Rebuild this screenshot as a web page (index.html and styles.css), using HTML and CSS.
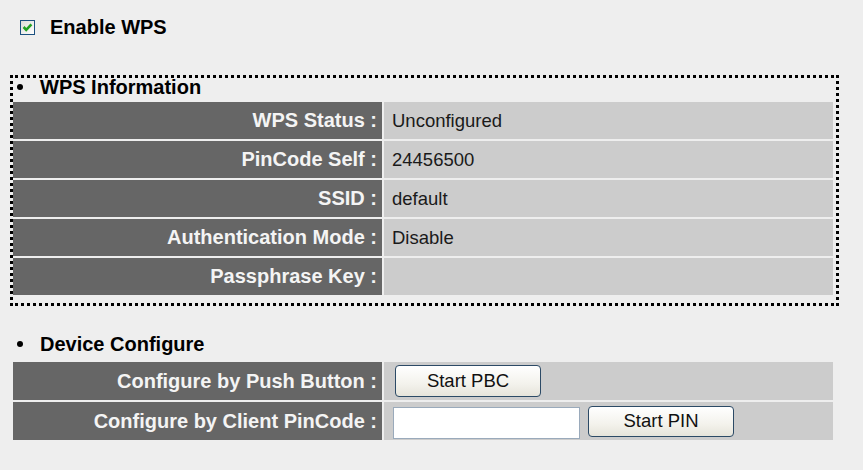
FILE: index.html
```html
<!DOCTYPE html>
<html>
<head>
<meta charset="utf-8">
<link rel="stylesheet" href="styles.css">
</head>
<body>
<div class="page">
  <div class="enable">
    <span class="check">
      <svg width="15" height="15" viewBox="0 0 15 15">
        <defs>
          <linearGradient id="cbg" x1="0" y1="0" x2="1" y2="1">
            <stop offset="0" stop-color="#dcdcd6"/>
            <stop offset="1" stop-color="#ffffff"/>
          </linearGradient>
        </defs>
        <rect x="0.5" y="0.5" width="14" height="14" fill="url(#cbg)" stroke="#1c5180"/>
        <path d="M3.6 7 L6.2 9.8 L11.4 4.3" fill="none" stroke="#21a121" stroke-width="2.6"/>
      </svg>
    </span>
    <span class="enable-label">Enable WPS</span>
  </div>

  <div class="info-box">
    <div class="section-head"><span class="bullet"></span><span>WPS Information</span></div>
    <div class="grid">
      <div class="label">WPS Status :</div><div class="value">Unconfigured</div>
      <div class="label">PinCode Self :</div><div class="value">24456500</div>
      <div class="label">SSID :</div><div class="value">default</div>
      <div class="label">Authentication Mode :</div><div class="value">Disable</div>
      <div class="label">Passphrase Key :</div><div class="value"></div>
    </div>
  </div>

  <div class="device">
    <div class="section-head"><span class="bullet"></span><span>Device Configure</span></div>
    <div class="grid dev-grid">
      <div class="label">Configure by Push Button :</div>
      <div class="value"><button class="btn pbc">Start PBC</button></div>
      <div class="label">Configure by Client PinCode :</div>
      <div class="value"><input class="pin-input" type="text"><button class="btn pin">Start PIN</button></div>
    </div>
  </div>
</div>
</body>
</html>
```
FILE: styles.css
```css
html, body {
  margin: 0;
  padding: 0;
  background: #eeeeee;
}
body {
  font-family: "Liberation Sans", Arial, sans-serif;
  color: #000;
}
.page {
  padding: 19px 0 0 10px;
  width: 829px;
}
.enable {
  display: flex;
  align-items: center;
  height: 16px;
  margin-bottom: 40px;
}
.check {
  display: block;
  width: 15px;
  height: 15px;
  margin-left: 10px;
}
.check svg { display: block; }
.enable-label {
  margin-left: 15px;
  font-weight: bold;
  font-size: 20px;
  line-height: 16px;
}
.info-box {
  border: 3px dotted #000;
  padding: 0 3px 8px 0;
}
.section-head {
  display: flex;
  align-items: center;
  padding-left: 4px;
  font-weight: bold;
  font-size: 20px;
  line-height: 18px;
  height: 18px;
  margin-bottom: 6px;
}
.bullet {
  display: block;
  width: 6px;
  height: 6px;
  border-radius: 50%;
  background: #000;
  margin-right: 17px;
}
.grid {
  display: grid;
  grid-template-columns: 369px 1fr;
  grid-auto-rows: 37px;
  gap: 2px;
  width: 820px;
}
.label {
  background: #666666;
  color: #f4f4f4;
  font-weight: bold;
  font-size: 20px;
  display: flex;
  align-items: center;
  justify-content: flex-end;
  padding-right: 5px;
}
.value {
  background: #cccccc;
  color: #1a1a1a;
  font-size: 18.5px;
  display: flex;
  align-items: center;
  padding-left: 8px;
}
.device {
  margin-top: 29px;
  padding-left: 3px;
}
.device .section-head {
  margin-bottom: 9px;
}
.dev-grid {
  grid-auto-rows: 38px;
}
.dev-grid .value {
  padding-left: 9px;
}
.btn {
  font-family: "Liberation Sans", Arial, sans-serif;
  font-size: 18.5px;
  color: #111;
  height: 32px;
  width: 146px;
  border: 1px solid #2c4a66;
  border-radius: 4px;
  background: linear-gradient(#ffffff, #f3f2ec 60%, #e6e4da);
  padding: 0;
}
.pbc {
  margin-left: 2px;
}
.pin-input {
  width: 187px;
  height: 32px;
  box-sizing: border-box;
  border: 1px solid #9aaabb;
  background: #fff;
  margin: 3px 0 0 0;
  padding: 0;
}
.pin {
  margin-left: 8px;
  height: 31px;
}
```
